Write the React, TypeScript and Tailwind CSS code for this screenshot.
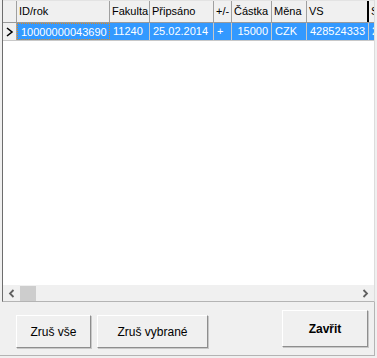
import React from "react";

const cols = [
  { title: "ID/rok", w: 93, value: "10000000043690", right: true },
  { title: "Fakulta", w: 40, value: "11240" },
  { title: "Připsáno", w: 64, value: "25.02.2014" },
  { title: "+/-", w: 18, value: "+" },
  { title: "Částka", w: 40, value: "15000", right: true },
  { title: "Měna", w: 35, value: "CZK" },
  { title: "VS", w: 62, value: "428524333" },
  { title: "S", w: 20, value: "2" },
];

function Btn(props: { label: string; className: string; bold?: boolean }) {
  return (
    <button
      className={
        "bg-[#f0f0f0] border border-t-white border-l-white border-r-[#8e8e8e] border-b-[#8e8e8e] shadow-[1px_1px_0_#c8c8c8] text-[12px] text-black " +
        props.className +
        (props.bold ? " font-bold" : "")
      }
    >
      {props.label}
    </button>
  );
}

export default function App() {
  return (
    <div
      className="w-[377px] h-[358px] bg-[#f0f0f0] flex flex-col overflow-hidden"
      style={{ fontFamily: '"Liberation Sans", Arial, sans-serif' }}
    >
      <div className="ml-[2px] mr-[2px] h-[302px] border-l border-l-[#6d6d6d] border-b border-b-[#b4b4b4] border-r border-r-[#dcdcdc] bg-white flex flex-col overflow-hidden">
        {/* header */}
        <div className="flex h-[23px] border-t border-t-[#e3e3e3] border-b border-b-[#9a9a9a] bg-[#f0f0f0] shrink-0">
          <div className="w-[14px] shrink-0 border-r border-r-[#a0a0a0]" />
          {cols.map((c, i) => (
            <div
              key={c.title}
              style={{ width: c.w }}
              className={
                "shrink-0 px-[2px] text-[11px] leading-[21px] text-black whitespace-nowrap overflow-hidden " +
                (i === 6 ? "border-r-2 border-r-black" : "border-r border-r-[#a0a0a0]")
              }
            >
              {c.title}
            </div>
          ))}
        </div>
        {/* row */}
        <div className="flex h-[18px] shrink-0 border-b border-b-[#c8c8c8]">
          <div className="w-[14px] shrink-0 bg-[#f0f0f0] border-r border-r-[#a0a0a0] flex items-center justify-center">
            <svg width="8" height="10" viewBox="0 0 8 10">
              <path d="M1 1 L6 5 L1 9" fill="none" stroke="#000" strokeWidth="1.6" />
            </svg>
          </div>
          {cols.map((c, i) => (
            <div
              key={c.title}
              style={{ width: c.w }}
              className={
                "shrink-0 bg-[#3399ff] text-white text-[11px] leading-[16px] px-[3px] whitespace-nowrap overflow-hidden " +
                (c.right ? "text-right " : "") +
                (i === 0
                  ? "border border-dotted border-[#e08a1e]"
                  : "border-r border-r-[#c8c8c8]")
              }
            >
              {c.value}
            </div>
          ))}
        </div>
        <div className="flex-1" />
        {/* horizontal scrollbar */}
        <div className="h-[16px] bg-[#f0f0f0] flex items-center shrink-0">
          <div className="w-[17px] flex items-center justify-center">
            <svg width="7" height="9" viewBox="0 0 7 9">
              <path d="M5.5 1 L2 4.5 L5.5 8" fill="none" stroke="#606060" strokeWidth="1.8" />
            </svg>
          </div>
          <div className="w-[16px] h-[15px] bg-[#cdcdcd]" />
          <div className="flex-1" />
          <div className="w-[17px] flex items-center justify-center">
            <svg width="7" height="9" viewBox="0 0 7 9">
              <path d="M1.5 1 L5 4.5 L1.5 8" fill="none" stroke="#606060" strokeWidth="1.8" />
            </svg>
          </div>
        </div>
      </div>
      {/* buttons */}
      <div className="flex items-start pt-[8px] pl-[16px] h-[54px] border-r border-r-[#b4b4b4] mr-[2px] border-b border-b-[#b4b4b4]">
        <Btn label="Zruš vše" className="w-[75px] h-[33px] mt-[5px]" />
        <Btn label="Zruš vybrané" className="w-[111px] h-[33px] mt-[5px] ml-[6px]" />
        <div className="flex-1" />
        <Btn label="Zavřit" bold className="w-[86px] h-[37px] mr-[6px]" />
      </div>
    </div>
  );
}
